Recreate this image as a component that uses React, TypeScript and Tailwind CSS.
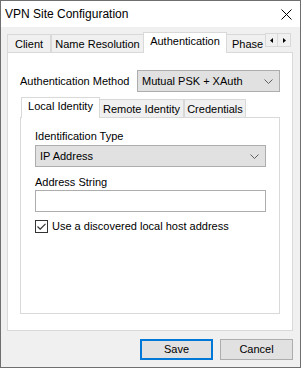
import React, {useState} from 'react';

const font = {fontFamily: '"Liberation Sans", Arial, sans-serif'};

function ComboBox({value, className}: {value: string; className?: string}) {
  return (
    <div
      className={`flex items-center justify-between h-[22px] bg-[#e1e1e1] border border-[#adadad] pl-[4px] pr-[6px] ${className ?? ''}`}>
      <span className="text-[11px] text-black leading-none">{value}</span>
      <svg width="9" height="5" viewBox="0 0 9 5" className="shrink-0">
        <path d="M0.5 0.5 L4.5 4.5 L8.5 0.5" fill="none" stroke="#606060" strokeWidth="1"/>
      </svg>
    </div>
  );
}

function Tab({label, selected, width, left}: { label: string; selected?: boolean; width: number; left?: boolean }) {
  return (
    <div
      style={{width}}
      className={`shrink-0 flex items-center ${left ? 'justify-start pl-[5px]' : 'justify-center'} border-l border-t border-r border-[#d9d9d9] text-[11px] text-black ${
        selected ? 'h-[21px] bg-white -mx-px relative z-10 pb-[3px]' : 'h-[19px] bg-[#f0f0f0] border-b pt-[1px]'}`}
    >
      <span className="whitespace-nowrap">{label}</span>
    </div>
  );
}

const App = () => {
  const [useDiscovered, setUseDiscovered] = useState<boolean>(true);

  return (
    <div style={font} className="w-[301px] h-[368px] flex flex-col border border-[#6f6f6f] bg-[#f0f0f0] overflow-hidden">

      {/* Title bar */}
      <div className="h-[26px] shrink-0 bg-white flex items-center justify-between pl-[4px] pr-[8px]">
        <span className="text-[12px] text-black">VPN Site Configuration</span>
        <svg width="11" height="11" viewBox="0 0 11 11">
          <path d="M0.5 0.5 L10.5 10.5 M10.5 0.5 L0.5 10.5" stroke="#000" strokeWidth="1"/>
        </svg>
      </div>

      {/* Body */}
      <div className="flex-1 flex flex-col pt-[5px] pl-[6px] pr-[7px]">

        {/* Outer tabs */}
        <div className="flex items-end h-[21px] -mb-px relative z-10">
          <div className="flex items-end flex-1 overflow-hidden h-[21px]">
            <Tab label="Client" width={44}/>
            <Tab label="Name Resolution" width={93}/>
            <Tab label="Authentication" selected width={84}/>
            <Tab label="Phase" width={40} left/>
          </div>
          <div className="flex self-start mt-[1px] mr-[2px]">
            <div className="w-[13px] h-[14px] border border-[#d9d9d9] bg-[#f0f0f0] flex items-center justify-center">
              <svg width="3" height="5" viewBox="0 0 3 5"><path d="M3 0 L0 2.5 L3 5 Z" fill="#000"/></svg>
            </div>
            <div className="w-[13px] h-[14px] border border-l-0 border-[#d9d9d9] bg-[#f0f0f0] flex items-center justify-center">
              <svg width="3" height="5" viewBox="0 0 3 5"><path d="M0 0 L3 2.5 L0 5 Z" fill="#000"/></svg>
            </div>
          </div>
        </div>

        {/* Outer panel */}
        <div className="flex-1 bg-white border border-[#d9d9d9] flex flex-col pt-[17px] px-[12px] pb-[16px]">

          <div className="flex items-center justify-between">
            <span className="text-[11px] text-black">Authentication Method</span>
            <ComboBox value="Mutual PSK + XAuth" className="w-[143px]"/>
          </div>

          {/* Inner tabs */}
          <div className="flex items-end h-[21px] -mb-px relative z-10 mt-[5px] pl-[2px]">
            <Tab label="Local Identity" selected width={79}/>
            <Tab label="Remote Identity" width={85}/>
            <Tab label="Credentials" width={62}/>
          </div>

          {/* Inner panel */}
          <div className="flex-1 bg-white border border-[#d9d9d9] flex flex-col pt-[12px] pl-[14px] pr-[13px]">
            <span className="text-[11px] text-black leading-[12px]">Identification Type</span>
            <ComboBox value="IP Address" className="mt-[3px]"/>

            <span className="text-[11px] text-black leading-[12px] mt-[9px]">Address String</span>
            <input
              type="text"
              className="mt-[2px] h-[22px] border border-[#adadad] bg-white outline-none text-[11px] px-[3px]"
            />

            <label className="flex items-center gap-[4px] mt-[6px] cursor-default">
              <span
                onClick={() => setUseDiscovered(!useDiscovered)}
                className="w-[13px] h-[13px] border border-[#333] bg-white flex items-center justify-center shrink-0"
              >
                {useDiscovered && (
                  <svg width="9" height="7" viewBox="0 0 9 7">
                    <path d="M0.5 3.5 L3.2 6.2 L8.5 0.8" fill="none" stroke="#333" strokeWidth="1.2"/>
                  </svg>
                )}
              </span>
              <span className="text-[11px] text-black">Use a discovered local host address</span>
            </label>
          </div>
        </div>

        {/* Footer */}
        <div className="h-[36px] shrink-0 flex items-start justify-end gap-[7px] pt-[8px]">
          <button className="w-[73px] h-[21px] bg-[#e1e1e1] border-2 border-[#0078d7] text-[11px] text-black">
            Save
          </button>
          <button className="w-[73px] h-[21px] bg-[#e1e1e1] border border-[#adadad] text-[11px] text-black">
            Cancel
          </button>
        </div>
      </div>
    </div>
  );
};

export default App;
